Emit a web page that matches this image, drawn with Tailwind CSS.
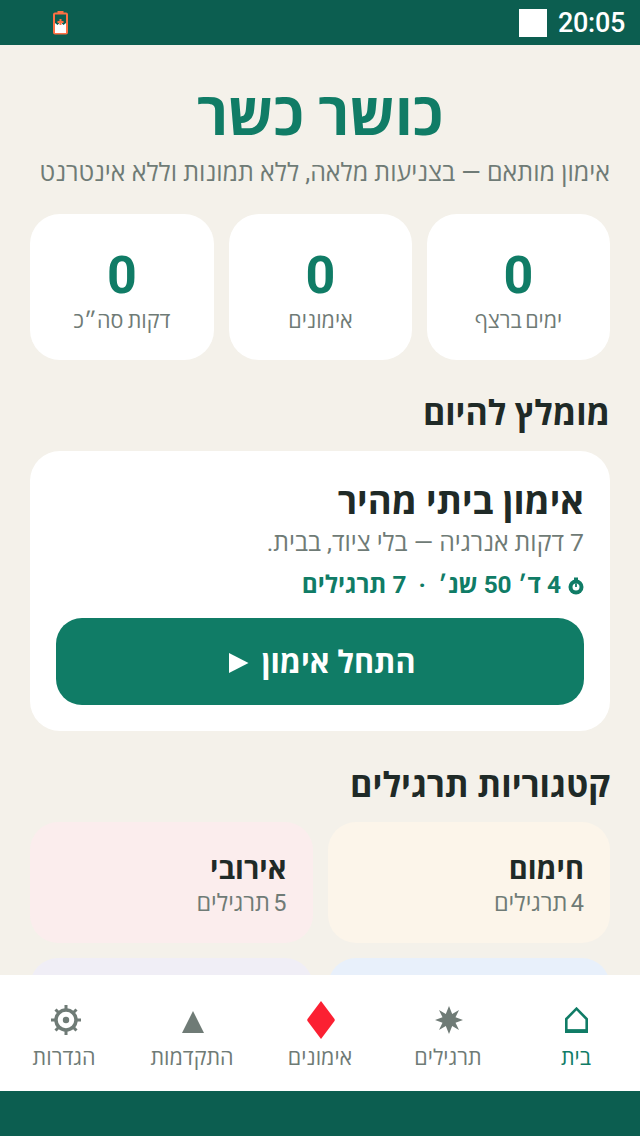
<!DOCTYPE html>
<html lang="he" dir="rtl">
<head>
    <meta charset="UTF-8">
    <title>כושר כשר</title>
    <script src="https://cdn.jsdelivr.net/npm/@tailwindcss/browser@4"></script>
</head>
<body class="font-['Roboto','Open_Sans',sans-serif]">
    <div class="flex flex-col h-[1136px] w-[640px] overflow-hidden bg-[#f4f1ea]">
        <!-- Status bar -->
        <div class="flex items-center justify-between h-[45px] shrink-0 bg-[#0c5e50] pl-[52px] pr-[15px]" dir="ltr">
            <svg width="17" height="26" viewBox="0 0 17 26">
                <rect x="5.500" y="1" width="6" height="3" fill="#ff7043"/>
                <rect x="2" y="3.500" width="13" height="20" rx="1" fill="#0c5e50" stroke="#ff7043" stroke-width="2"/>
                <path d="M3 13l2.500 2 3-3 3 3 2.500-2v10H3z" fill="#fff"/>
                <path d="M8.500 9v6M5.500 12h6" stroke="#ff7043" stroke-width="2"/>
            </svg>
            <div class="flex items-center gap-[11px]">
                <div class="w-[28px] h-[28px] bg-white"></div>
                <span class="text-white text-[27px] leading-none font-medium tracking-[-0.3px] mt-[1px]">20:05</span>
            </div>
        </div>

        <!-- Content -->
        <main class="flex-1 overflow-hidden px-[30px]">
            <h1 class="text-center text-[58.500px] leading-[70px] font-bold text-[#107c66] mt-[35px]">כושר כשר</h1>
            <p class="text-center text-[25px] leading-[36px] text-[#6f7b76] mt-[5px] pl-[10px] whitespace-nowrap">אימון מותאם — בצניעות מלאה, ללא תמונות וללא אינטרנט</p>

            <div class="grid grid-cols-[183px_183px_184px] gap-[15px] mt-[23px]">
                <div class="h-[146px] bg-white rounded-[30px] flex flex-col items-center pt-[32px]">
                    <span class="text-[52px] leading-[60px] font-bold text-[#107c66]">0</span>
                    <span class="text-[21.500px] leading-[30px] text-[#6f7b76] [word-spacing:-2px]">ימים ברצף</span>
                </div>
                <div class="h-[146px] bg-white rounded-[30px] flex flex-col items-center pt-[32px]">
                    <span class="text-[52px] leading-[60px] font-bold text-[#107c66]">0</span>
                    <span class="text-[21.500px] leading-[30px] text-[#6f7b76]">אימונים</span>
                </div>
                <div class="h-[146px] bg-white rounded-[30px] flex flex-col items-center pt-[32px]">
                    <span class="text-[52px] leading-[60px] font-bold text-[#107c66]">0</span>
                    <span class="text-[21.500px] leading-[30px] text-[#6f7b76] [word-spacing:-1px]">דקות סה״כ</span>
                </div>
            </div>

            <h2 class="text-[34px] leading-[44px] font-bold text-[#1f2a27] mt-[31px]">מומלץ להיום</h2>
            <section class="h-[280px] bg-white rounded-[30px] mt-[16px] px-[26px] pt-[28px]">
                <h3 class="text-[36.500px] leading-[46px] font-bold text-[#1f2a27]">אימון ביתי מהיר</h3>
                <p class="text-[24.800px] leading-[36px] text-[#6f7b76]">7 דקות אנרגיה — בלי ציוד, בבית.</p>
                <p class="flex items-center gap-[7px] text-[24.400px] leading-[34px] font-bold text-[#107c66] mt-[7px]">
                    <svg width="16" height="18" viewBox="0 0 16 18" class="mt-[1px]">
                        <circle cx="8" cy="10" r="7.500" fill="#107c66"/>
                        <rect x="6" y="0.500" width="4" height="2.500" fill="#107c66"/>
                        <circle cx="8" cy="10" r="3.500" fill="#fff"/>
                        <path d="M8 6.500v3.500" stroke="#107c66" stroke-width="1.800"/>
                    </svg>
                    <span>4 ד׳ 50 שנ׳ &nbsp;·&nbsp; 7 תרגילים</span>
                </p>
                <button class="flex items-center justify-center gap-[13px] w-full h-[87px] mt-[16px] pl-[4px] rounded-[26px] bg-[#107c66] text-white text-[30.600px] font-bold">
                    <span class="mt-[2px]">התחל אימון</span>
                    <svg width="20" height="20" viewBox="0 0 20 20" class="mt-[2px]"><path d="M0 0l19.500 10L0 20z" fill="#fff"/></svg>
                </button>
            </section>

            <h2 class="text-[34.200px] leading-[44px] font-bold text-[#1f2a27] mt-[32px]">קטגוריות תרגילים</h2>
            <div class="grid grid-cols-2 gap-[15px] mt-[15px]">
                <div class="h-[121px] bg-[#fcf5ea] rounded-[28px] px-[26px] pt-[28px]">
                    <div class="text-[29px] leading-[38px] font-bold text-[#1f2a27]">חימום</div>
                    <div class="text-[23.500px] leading-[30px] text-[#6f7b76] [word-spacing:-2.500px]">4 תרגילים</div>
                </div>
                <div class="h-[121px] bg-[#fbeded] rounded-[28px] px-[26px] pt-[28px]">
                    <div class="text-[29px] leading-[38px] font-bold text-[#1f2a27]">אירובי</div>
                    <div class="text-[23.500px] leading-[30px] text-[#6f7b76] [word-spacing:-2.500px]">5 תרגילים</div>
                </div>
                <div class="h-[121px] bg-[#e8f0fb] rounded-[28px]"></div>
                <div class="h-[121px] bg-[#f0eef6] rounded-[28px]"></div>
            </div>
        </main>

        <!-- Bottom nav -->
        <nav class="relative z-10 grid grid-cols-5 h-[116px] shrink-0 bg-white text-[21.500px] text-[#6f7b76] pt-[26px]">
            <a class="flex flex-col items-center text-[#107c66]">
                <span class="flex items-center justify-center h-[38px]">
                    <svg width="23" height="26" viewBox="0 0 23 26" class="mr-[-1px]"><path d="M1.300 12L11.500 1.700 21.700 12v11.500H1.300z" fill="none" stroke="#107c66" stroke-width="2.600"/><path d="M0 22.500h23V26H0z" fill="#107c66"/></svg>
                </span>
                <span class="leading-[30px] mt-[4px]">בית</span>
            </a>
            <a class="flex flex-col items-center">
                <span class="flex items-center justify-center h-[38px]">
                    <svg width="28" height="28" viewBox="0 0 28 28" class="mr-[-1px]"><path d="M14 0l3.200 8L24 4l-3.500 7.200L28 14l-7.500 2.800L24 24l-6.800-4L14 28l-3.200-8L4 24l3.500-7.200L0 14l7.500-2.800L4 4l6.800 4z" fill="#6f7b76"/></svg>
                </span>
                <span class="leading-[30px] mt-[4px]">תרגילים</span>
            </a>
            <a class="flex flex-col items-center">
                <span class="flex items-center justify-center h-[38px]">
                    <svg width="28" height="38" viewBox="0 0 28 38" class="mr-[-2px]"><path d="M14 0l13.500 18a2 2 0 0 1 0 2L14 38 .5 20a2 2 0 0 1 0-2z" fill="#fb2032"/></svg>
                </span>
                <span class="leading-[30px] mt-[4px]">אימונים</span>
            </a>
            <a class="flex flex-col items-center">
                <span class="flex items-center justify-center h-[38px]">
                    <svg width="22" height="24" viewBox="0 0 22 24" class="mt-[4px] mr-[-2px]"><path d="M11 1l11 22H0z" fill="#6f7b76"/></svg>
                </span>
                <span class="leading-[30px] mt-[4px]">התקדמות</span>
            </a>
            <a class="flex flex-col items-center">
                <span class="flex items-center justify-center h-[38px]">
                    <svg width="30" height="30" viewBox="0 0 30 30" class="mr-[-3px]">
                        <circle cx="15" cy="15" r="10" fill="none" stroke="#6f7b76" stroke-width="3.500"/>
                        <circle cx="15" cy="15" r="3.200" fill="#6f7b76"/>
                        <path d="M15 0v5M15 25v5M0 15h5M25 15h5M4.500 4.500l3.500 3.500M22 22l3.500 3.500M25.500 4.500L22 8M8 22l-3.500 3.500" stroke="#6f7b76" stroke-width="3"/>
                    </svg>
                </span>
                <span class="leading-[30px] mt-[4px]">הגדרות</span>
            </a>
        </nav>

        <!-- System nav bar -->
        <div class="h-[45px] shrink-0 bg-[#0c5e50]"></div>
    </div>
</body>
</html>
